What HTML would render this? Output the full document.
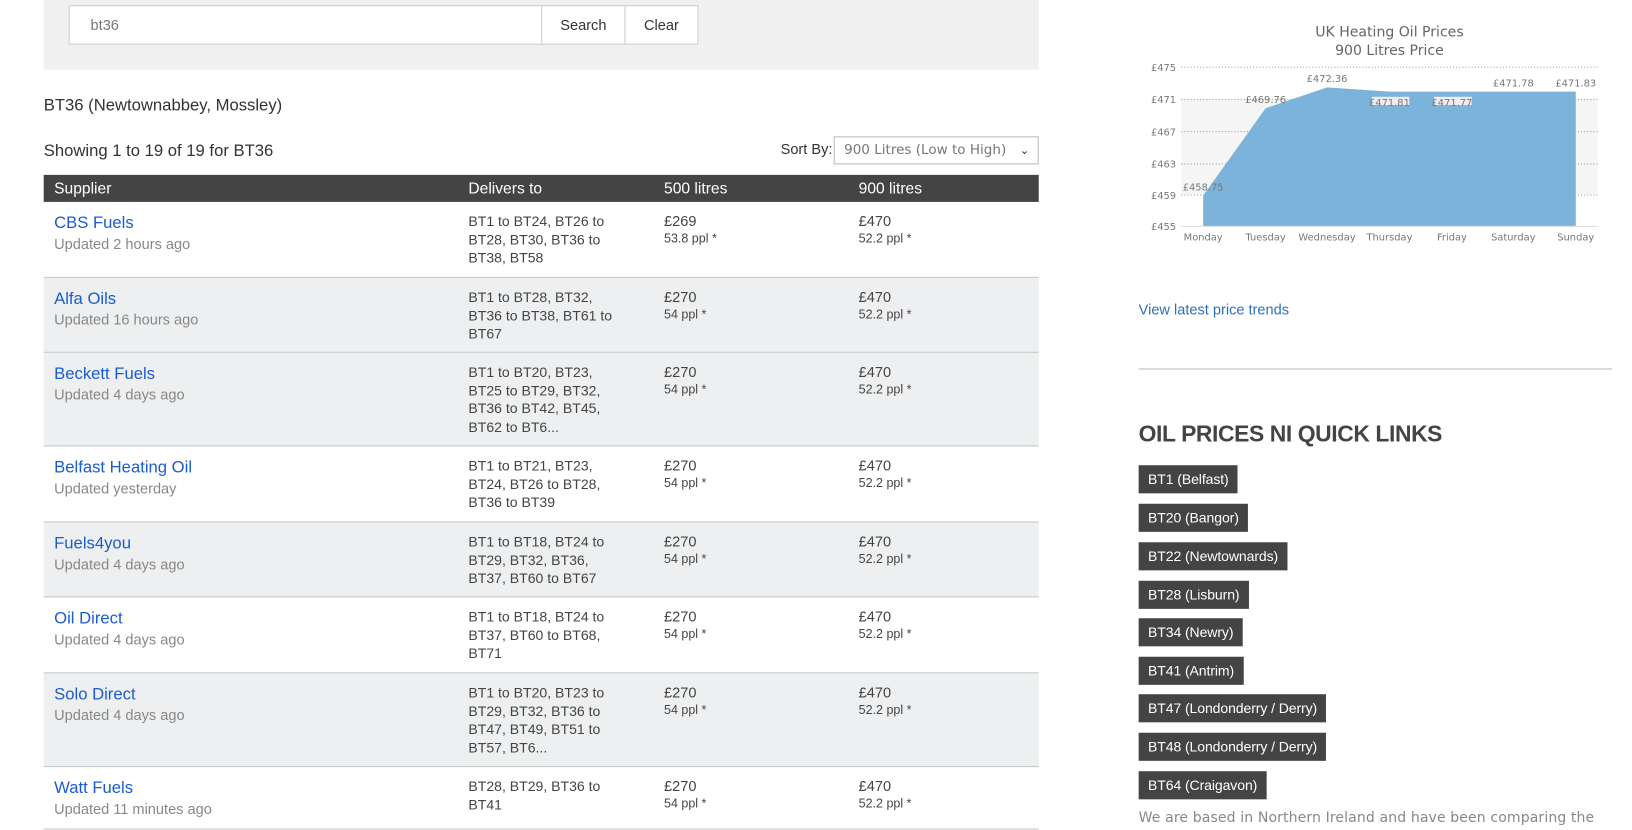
<!DOCTYPE html>
<html><head><meta charset="utf-8"><style>
html,body{margin:0;padding:0;width:1632px;height:829px;overflow:hidden;background:#fff;font-family:"Liberation Sans",sans-serif;color:#333}
#w{position:absolute;left:0;top:0;width:1568px;height:796px;transform:scale(1.0408);transform-origin:0 0}
.a{position:absolute}
.panel{left:42px;top:-5px;width:956px;height:72px;background:#f0f0f0}
.inp{left:66px;top:5px;border:1px solid #ccc;background:#fff;font-size:14px;color:#777;line-height:36px;padding-left:20px;box-sizing:border-box;width:455px;height:38px}
.btn{top:5px;height:38px;border:1px solid #ccc;background:#fff;font-size:14px;color:#333;text-align:center;line-height:36px;box-sizing:border-box}
.t{font-size:16px;color:#333}
.sel{left:801px;top:131px;width:197px;height:27px;border:1px solid #bbb;box-sizing:border-box;color:#777;line-height:25px;padding-left:9px;font-family:"DejaVu Sans",sans-serif;font-size:13px}
.hd{left:42px;top:168px;width:956px;height:26px;background:#444;color:#fff;font-size:15px;line-height:26px}
.hd span{position:absolute;top:1px}
.row{left:42px;width:956px;border-bottom:1px solid #c4c4c4;box-sizing:border-box}
.row.g{background:#eeeff0}
.nm{position:absolute;left:10px;top:12px;font-size:16px;color:#1a5ccf}
.up{position:absolute;left:10px;top:32px;font-size:14px;color:#888}
.dv{position:absolute;left:408px;top:10px;width:150px;font-size:13.5px;line-height:17.5px;color:#444}
.p{position:absolute;top:10px;font-size:14px;color:#444;line-height:17px}
.p small{display:block;font-size:12px;line-height:17px}
.tag{position:absolute;left:1094px;height:27px;background:#444;color:#fff;font-size:13.5px;line-height:27px;padding:0 9px;letter-spacing:-0.1px}
</style></head><body><div id="w">
<div class="a panel"></div>
<div class="a inp">bt36</div>
<div class="a btn" style="left:520px;width:81px">Search</div>
<div class="a btn" style="left:600px;width:71px">Clear</div>
<div class="a t" style="left:42px;top:93px">BT36 (Newtownabbey, Mossley)</div>
<div class="a t" style="left:42px;top:137px;font-size:16px">Showing 1 to 19 of 19 for BT36</div>
<div class="a" style="left:750px;top:135px;font-size:14px">Sort By:</div>
<div class="a sel">900 Litres (Low to High)<span style="position:absolute;right:8px;top:0;font-size:11px;color:#333">&#8964;</span></div>
<div class="a hd"><span style="left:10px">Supplier</span><span style="left:408px">Delivers to</span><span style="left:596px">500 litres</span><span style="left:783px">900 litres</span></div>

<div class="a row" style="top:194px;height:73px"><div class="nm">CBS Fuels</div><div class="up">Updated 2 hours ago</div><div class="dv">BT1 to BT24, BT26 to BT28, BT30, BT36 to BT38, BT58</div><div class="p" style="left:596px">£269<small>53.8 ppl *</small></div><div class="p" style="left:783px">£470<small>52.2 ppl *</small></div></div>
<div class="a row g" style="top:267px;height:72px"><div class="nm">Alfa Oils</div><div class="up">Updated 16 hours ago</div><div class="dv">BT1 to BT28, BT32, BT36 to BT38, BT61 to BT67</div><div class="p" style="left:596px">£270<small>54 ppl *</small></div><div class="p" style="left:783px">£470<small>52.2 ppl *</small></div></div>
<div class="a row g" style="top:339px;height:90px"><div class="nm">Beckett Fuels</div><div class="up">Updated 4 days ago</div><div class="dv">BT1 to BT20, BT23, BT25 to BT29, BT32, BT36 to BT42, BT45, BT62 to BT6...</div><div class="p" style="left:596px">£270<small>54 ppl *</small></div><div class="p" style="left:783px">£470<small>52.2 ppl *</small></div></div>
<div class="a row" style="top:429px;height:73px"><div class="nm">Belfast Heating Oil</div><div class="up">Updated yesterday</div><div class="dv">BT1 to BT21, BT23, BT24, BT26 to BT28, BT36 to BT39</div><div class="p" style="left:596px">£270<small>54 ppl *</small></div><div class="p" style="left:783px">£470<small>52.2 ppl *</small></div></div>
<div class="a row g" style="top:502px;height:72px"><div class="nm">Fuels4you</div><div class="up">Updated 4 days ago</div><div class="dv">BT1 to BT18, BT24 to BT29, BT32, BT36, BT37, BT60 to BT67</div><div class="p" style="left:596px">£270<small>54 ppl *</small></div><div class="p" style="left:783px">£470<small>52.2 ppl *</small></div></div>
<div class="a row" style="top:574px;height:73px"><div class="nm">Oil Direct</div><div class="up">Updated 4 days ago</div><div class="dv">BT1 to BT18, BT24 to BT37, BT60 to BT68, BT71</div><div class="p" style="left:596px">£270<small>54 ppl *</small></div><div class="p" style="left:783px">£470<small>52.2 ppl *</small></div></div>
<div class="a row g" style="top:647px;height:90px"><div class="nm">Solo Direct</div><div class="up">Updated 4 days ago</div><div class="dv">BT1 to BT20, BT23 to BT29, BT32, BT36 to BT47, BT49, BT51 to BT57, BT6...</div><div class="p" style="left:596px">£270<small>54 ppl *</small></div><div class="p" style="left:783px">£470<small>52.2 ppl *</small></div></div>
<div class="a row" style="top:737px;height:60px"><div class="nm">Watt Fuels</div><div class="up">Updated 11 minutes ago</div><div class="dv">BT28, BT29, BT36 to BT41</div><div class="p" style="left:596px">£270<small>54 ppl *</small></div><div class="p" style="left:783px">£470<small>52.2 ppl *</small></div></div>

<svg class="a" style="left:1094px;top:0" width="460" height="250" viewBox="1094 0 460 250" font-family="DejaVu Sans,sans-serif">
<text x="1335" y="35" font-size="13.5" fill="#666" text-anchor="middle">UK Heating Oil Prices</text>
<text x="1335" y="53" font-size="13.5" fill="#666" text-anchor="middle">900 Litres Price</text>
<rect x="1135" y="95" width="400" height="92" fill="#f5f5f5"/>
<g stroke="#999" stroke-dasharray="1,2" stroke-width="1">
<line x1="1135" x2="1535" y1="64.5" y2="64.5"/><line x1="1135" x2="1535" y1="95.5" y2="95.5"/><line x1="1135" x2="1535" y1="126.5" y2="126.5"/><line x1="1135" x2="1535" y1="157.5" y2="157.5"/><line x1="1135" x2="1535" y1="187.5" y2="187.5"/></g>
<line x1="1135" x2="1535" y1="217.5" y2="217.5" stroke="#ddd"/>
<polygon points="1156,188 1216,104 1275,84 1335,88 1395,88 1454,88 1514,88 1514,217 1156,217" fill="#7cb3da"/>
<g font-size="9.5" fill="#777" text-anchor="end">
<text x="1130" y="68">£475</text><text x="1130" y="99">£471</text><text x="1130" y="130">£467</text><text x="1130" y="161">£463</text><text x="1130" y="191">£459</text><text x="1130" y="221">£455</text></g>
<g font-size="9.5" fill="#777" text-anchor="middle">
<text x="1156" y="231">Monday</text><text x="1216" y="231">Tuesday</text><text x="1275" y="231">Wednesday</text><text x="1335" y="231">Thursday</text><text x="1395" y="231">Friday</text><text x="1454" y="231">Saturday</text><text x="1514" y="231">Sunday</text>
<text x="1156" y="183">£458.75</text><text x="1216" y="99">£469.76</text><text x="1275" y="79">£472.36</text>
<rect x="1318" y="93" width="36" height="8" fill="#eee"/><rect x="1378" y="93" width="36" height="8" fill="#eee"/>
<text x="1335" y="102">£471.81</text><text x="1395" y="102">£471.77</text><text x="1454" y="83">£471.78</text><text x="1514" y="83">£471.83</text></g>
</svg>
<div class="a" style="left:1094px;top:289px;font-size:14px;color:#2a72c0">View latest price trends</div>
<div class="a" style="left:1094px;top:354px;width:455px;border-top:1px solid #bbb"></div>
<div class="a" style="left:1094px;top:404px;font-size:22px;color:#444;font-weight:bold;letter-spacing:-0.4px">OIL PRICES NI QUICK LINKS</div>
<div class="tag" style="top:447px">BT1 (Belfast)</div>
<div class="tag" style="top:484px">BT20 (Bangor)</div>
<div class="tag" style="top:521px">BT22 (Newtownards)</div>
<div class="tag" style="top:558px">BT28 (Lisburn)</div>
<div class="tag" style="top:594px">BT34 (Newry)</div>
<div class="tag" style="top:631px">BT41 (Antrim)</div>
<div class="tag" style="top:667px">BT47 (Londonderry / Derry)</div>
<div class="tag" style="top:704px">BT48 (Londonderry / Derry)</div>
<div class="tag" style="top:741px">BT64 (Craigavon)</div>
<div class="a" style="left:1094px;top:778px;font-size:13.5px;color:#888;font-family:'DejaVu Sans',sans-serif;white-space:nowrap;letter-spacing:0.1px">We are based in Northern Ireland and have been comparing the</div>
</div></body></html>
